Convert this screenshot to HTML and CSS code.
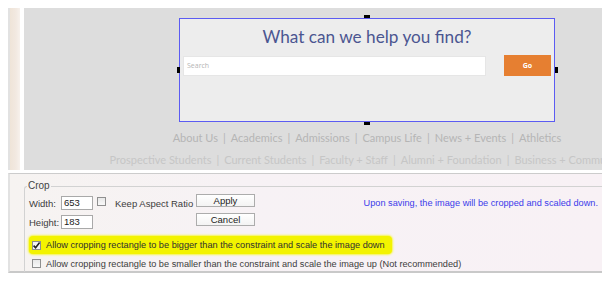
FILE: index.html
```html
<!DOCTYPE html>
<html lang="en">
<head>
    <meta charset="UTF-8">
    <title>Crop image</title>
    <link rel="stylesheet" href="styles.css">
</head>
<body>
    <div class="screen">
        <!-- preview of the page being cropped -->
        <div class="preview">
            <div class="gutter">
                <span class="g-line"></span>
                <span class="g-beige"></span>
                <span class="g-white"></span>
            </div>
            <div class="canvas">
                <div class="search-box">
                    <h1>What can we help you find?</h1>
                    <div class="search-row">
                        <div class="search-field">Search</div>
                        <div class="go-button">Go</div>
                    </div>
                    <span class="handle handle-top"></span>
                    <span class="handle handle-left"></span>
                    <span class="handle handle-right"></span>
                    <span class="handle handle-bottom"></span>
                </div>
                <div class="links">
                    <span>About Us</span><i>|</i><span>Academics</span><i>|</i><span>Admissions</span><i>|</i><span>Campus Life</span><i>|</i><span>News + Events</span><i>|</i><span>Athletics</span>
                </div>
                <div class="links links-alt">
                    <span>Prospective Students</span><i>|</i><span>Current Students</span><i>|</i><span>Faculty + Staff</span><i>|</i><span>Alumni + Foundation</span><i>|</i><span>Business + Community</span>
                </div>
            </div>
        </div>

        <!-- crop settings -->
        <div class="editor">
            <fieldset class="crop">
                <legend>Crop</legend>
                <div class="crop-top">
                    <div class="dims">
                        <span class="lbl">Width:</span>
                        <span class="field">653</span>
                        <span class="check"></span>
                        <span class="lbl">Keep Aspect Ratio</span>
                        <span class="btn">Apply</span>

                        <span class="lbl">Height:</span>
                        <span class="field">183</span>
                        <span></span>
                        <span></span>
                        <span class="btn">Cancel</span>
                    </div>
                    <p class="note">Upon saving, the image will be cropped and scaled down.</p>
                </div>
                <div class="option">
                    <span class="highlight">
                        <span class="check checked">
                            <svg width="9" height="9" viewBox="0 0 9 9"><path d="M1.6 4.6 L3.6 6.8 L7.6 1.6" fill="none" stroke="#222" stroke-width="1.6"/></svg>
                        </span>
                        Allow cropping rectangle to be bigger than the constraint and scale the image down
                    </span>
                </div>
                <div class="option option-second">
                    <span class="check"></span>
                    Allow cropping rectangle to be smaller than the constraint and scale the image up (Not recommended)
                </div>
            </fieldset>
        </div>
    </div>
</body>
</html>
```

FILE: styles.css
```css
* {
    margin: 0;
    padding: 0;
    box-sizing: border-box;
}

html, body {
    width: 611px;
    height: 282px;
    overflow: hidden;
}

body {
    background-color: #ffffff;
    font-family: 'Liberation Sans', Arial, sans-serif;
    color: #3c3c3c;
}

.screen {
    padding: 8px 9px 0 8px;
}

/* preview area */
.preview {
    display: flex;
    height: 162px;
}

.gutter {
    display: flex;
    width: 16px;
}

.g-line {
    width: 2px;
    background-color: #e2e2e2;
}

.g-beige {
    width: 10px;
    background: linear-gradient(to right, #efe4d8, #f2e9e1 60%, #f7f1ec);
}

.g-white {
    width: 4px;
    background-color: #ffffff;
}

.canvas {
    flex: 1;
    background-color: #dddddd;
    overflow: hidden;
    padding-top: 10px;
}

.search-box {
    position: relative;
    width: 376px;
    height: 104px;
    margin-left: 155px;
    background-color: #ededed;
    border: 1px solid #5b5bf2;
}

.search-box h1 {
    font-family: Lato, 'Open Sans', sans-serif;
    font-weight: 400;
    font-size: 17.2px;
    line-height: 20px;
    color: #4b5691;
    text-align: center;
    margin-top: 8px;
}

.search-row {
    display: flex;
    justify-content: space-between;
    align-items: center;
    padding: 0 3px;
    margin-top: 8px;
}

.search-field {
    width: 303px;
    height: 20px;
    background-color: #ffffff;
    border: 1px solid #e6e6e6;
    font-family: 'Open Sans', sans-serif;
    font-size: 7px;
    line-height: 18px;
    color: #b5b5b5;
    padding-left: 3px;
}

.go-button {
    width: 47px;
    height: 21px;
    background-color: #e67f31;
    color: #ffffff;
    font-family: 'Open Sans', sans-serif;
    font-weight: 700;
    font-size: 7px;
    line-height: 21px;
    text-align: center;
}

.handle {
    position: absolute;
    background-color: #000000;
}

.handle-top,
.handle-bottom {
    width: 6px;
    height: 3px;
    left: 184px;
}

.handle-top {
    top: -4px;
}

.handle-bottom {
    bottom: -4px;
}

.handle-left,
.handle-right {
    width: 3px;
    height: 6px;
    top: 48px;
}

.handle-left {
    left: -3px;
}

.handle-right {
    right: -4px;
}

.links {
    display: flex;
    justify-content: center;
    white-space: nowrap;
    width: 376px;
    margin-left: 155px;
    margin-top: 9px;
    font-family: Lato, 'Open Sans', sans-serif;
    font-size: 11px;
    line-height: 14px;
    color: #b5b5b5;
}

.links i {
    font-style: normal;
    margin: 0 5px;
}

.links-alt {
    margin-top: 8px;
    color: #c6c6c6;
}

/* crop editor */
.editor {
    height: 100px;
    margin-top: 3px;
    border-top: 1px solid #cccccc;
    border-bottom: 2px solid #c9c9c9;
    border-left: 2px solid #e2e2e2;
    background: linear-gradient(to right, #f6f3f1, #f7f2f5 40%, #f8f1f5);
    font-size: 9.2px;
}

.crop {
    margin: 6px 0 0 14px;
    padding: 0 0 0 4px;
    border: 1px solid #d2d2d2;
    border-right: 0;
    border-bottom: 0;
    border-top-left-radius: 3px;
    height: 92px;
}

.crop legend {
    font-size: 10px;
    line-height: 12px;
    padding: 0 1px;
    margin-left: -2px;
    color: #444444;
}

.crop-top {
    display: flex;
    margin-top: 2px;
}

.dims {
    display: grid;
    grid-template-columns: 32px 36px 18px 81px 59px;
    grid-template-rows: 19px 19px;
    align-items: center;
    font-size: 9.5px;
}

.lbl {
    line-height: 12px;
    padding-top: 1px;
}

.field {
    align-self: start;
    margin-top: 2px;
    width: 32px;
    height: 14px;
    background-color: #ffffff;
    border: 1px solid #a9a9a9;
    padding-left: 2px;
    line-height: 12px;
    color: #222222;
}

.btn {
    align-self: start;
    height: 13px;
    background: linear-gradient(#ffffff, #f3f3f3);
    border: 1px solid #acacac;
    text-align: center;
    line-height: 11px;
    color: #222222;
}

.check {
    display: inline-block;
    width: 9px;
    height: 9px;
    border: 1px solid #8f8f8f;
    background: linear-gradient(#e8e8e8, #f8f8f8);
    vertical-align: middle;
}

.dims .check {
    align-self: start;
    margin-top: 3px;
}

.check.checked {
    background: #f4f4f4;
    position: relative;
}

.check.checked svg {
    position: absolute;
    top: -1px;
    left: -1px;
}

.note {
    margin-left: auto;
    margin-right: 4px;
    margin-top: 3px;
    line-height: 12px;
    color: #3b3bea;
}

.option {
    display: flex;
    align-items: center;
    height: 18px;
    margin-top: 4px;
}

.highlight {
    display: inline-flex;
    align-items: center;
    gap: 5px;
    height: 18px;
    padding: 0 7px 0 3px;
    background-color: #f3f300;
    border-radius: 4px;
    box-shadow: 0 0 2px 1px #f6f64a;
    color: #2f2f2f;
}

.option-second {
    gap: 5px;
    padding-left: 3px;
    height: 17px;
    margin-top: 1px;
}
```
